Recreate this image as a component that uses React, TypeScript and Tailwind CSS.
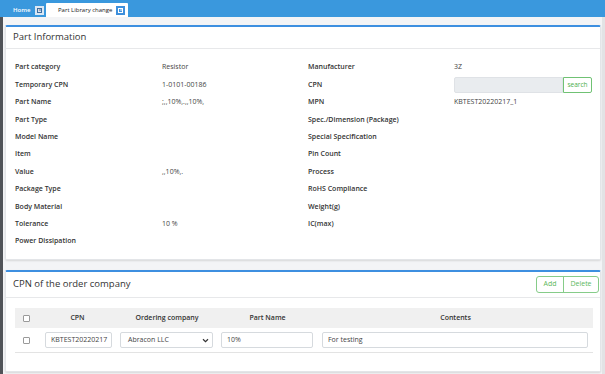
import React from "react";

const left: [string, string][] = [
  ["Part category", "Resistor"],
  ["Temporary CPN", "1-0101-00186"],
  ["Part Name", ";,,10%,.,,10%,"],
  ["Part Type", ""],
  ["Model Name", ""],
  ["Item", ""],
  ["Value", ",,10%,."],
  ["Package Type", ""],
  ["Body Material", ""],
  ["Tolerance", "10 %"],
  ["Power Dissipation", ""],
];

const right: [string, string][] = [
  ["Manufacturer", "3Z"],
  ["CPN", "__INPUT__"],
  ["MPN", "KBTEST20220217_1"],
  ["Spec./Dimension (Package)", ""],
  ["Special Specification", ""],
  ["Pin Count", ""],
  ["Process", ""],
  ["RoHS Compliance", ""],
  ["Weight(g)", ""],
  ["IC(max)", ""],
  ["", ""],
];

function CloseIcon({ active }: { active?: boolean }) {
  return active ? (
    <span className="inline-flex w-[9px] h-[9px] bg-[#3d8fdc] items-center justify-center shrink-0">
      <span className="w-[5px] h-[5px] border border-white flex items-center justify-center text-white text-[5px] leading-none">
        ×
      </span>
    </span>
  ) : (
    <span className="inline-flex w-[9px] h-[9px] bg-[#dbe7f3] items-center justify-center shrink-0">
      <span className="w-[5px] h-[5px] border border-[#3d6ea0] flex items-center justify-center text-[#2d4f74] text-[5px] leading-none">
        ×
      </span>
    </span>
  );
}

function Check() {
  return <span className="inline-block w-[7px] h-[7px] border border-[#9a9a9a] rounded-[1px] bg-white" />;
}

export default function App() {
  return (
    <div className="w-[605px] h-[374px] overflow-hidden bg-[#f3f4f6] font-['Open_Sans',sans-serif] text-[#333] flex flex-col">
      {/* tab bar */}
      <div className="h-[17px] bg-[#3a98dd] flex items-end shrink-0">
        <div className="h-[14px] w-[46px] pl-[13px] flex items-center gap-[5px]">
          <span className="text-white text-[6px] font-semibold">Home</span>
          <CloseIcon />
        </div>
        <div className="h-[14px] w-[82px] bg-white flex items-center pl-[12px] gap-[4px] rounded-t-[1px] whitespace-nowrap">
          <span className="text-[#222] text-[6px]">Part Library change</span>
          <CloseIcon active />
        </div>
      </div>

      <div className="flex flex-1">
        <div className="w-[3px] bg-[#505358]" />
        <div className="flex-1 pl-[2px] pr-[1px] pt-[8px] flex flex-col gap-[10px]">
          {/* Card 1 */}
          <div className="bg-white border border-[#e3e5e8] border-t-2 border-t-[#3d8fe0] rounded-[2px] shadow-[0_1px_2px_rgba(0,0,0,0.12)] h-[235px]">
            <div className="h-[22px] flex items-center pl-[7px] text-[9.5px] text-[#333] border-b border-[#e7e8ea]">
              Part Information
            </div>
            <div className="pl-[9px] pt-[10px] grid grid-cols-[147px_146px_146px_138px]">
              {left.map((l, i) => (
                <React.Fragment key={i}>
                  <div className="h-[17.4px] flex items-center text-[7px] font-semibold text-[#333]">{l[0]}</div>
                  <div className="h-[17.4px] flex items-center text-[7px] text-[#444]">{l[1]}</div>
                  <div className="h-[17.4px] flex items-center text-[7px] font-semibold text-[#333]">{right[i][0]}</div>
                  <div className="h-[17.4px] flex items-center text-[7px] text-[#444]">
                    {right[i][1] === "__INPUT__" ? (
                      <div className="flex h-[16px] w-full">
                        <div className="flex-1 bg-[#e9ecef] border border-[#dfe2e6] rounded-l-[2px]" />
                        <div className="w-[29px] border border-[#70c274] rounded-r-[2px] text-[#4cae4c] text-[6.5px] flex items-center justify-center bg-white">
                          search
                        </div>
                      </div>
                    ) : (
                      right[i][1]
                    )}
                  </div>
                </React.Fragment>
              ))}
            </div>
          </div>

          {/* Card 2 */}
          <div className="bg-white border border-[#e3e5e8] border-t-2 border-t-[#3d8fe0] rounded-[2px] shadow-[0_1px_2px_rgba(0,0,0,0.12)] h-[102px]">
            <div className="h-[26px] flex items-center justify-between pl-[7px] pr-[1px] border-b border-[#e7e8ea]">
              <span className="text-[9.5px] text-[#333]">CPN of the order company</span>
              <div className="flex h-[17px] border border-[#86cc89] rounded-[3px] text-[7px] text-[#5cb85c]">
                <div className="w-[27px] flex items-center justify-center border-r border-[#86cc89]">Add</div>
                <div className="w-[34px] flex items-center justify-center">Delete</div>
              </div>
            </div>
            <div className="pl-[9px] pt-[10px] w-[588px]">
              <div className="grid grid-cols-[23px_79px_100px_101px_275px] text-[7px]">
                <div className="h-[20px] bg-[#f0f0f0] flex items-center justify-center"><Check /></div>
                <div className="h-[20px] bg-[#f0f0f0] flex items-center justify-center font-semibold">CPN</div>
                <div className="h-[20px] bg-[#f0f0f0] flex items-center justify-center font-semibold">Ordering company</div>
                <div className="h-[20px] bg-[#f0f0f0] flex items-center justify-center font-semibold">Part Name</div>
                <div className="h-[20px] bg-[#f0f0f0] flex items-center justify-center font-semibold">Contents</div>

                <div className="h-[25px] border-b border-[#e3e3e3] flex items-center justify-center"><Check /></div>
                <div className="h-[25px] border-b border-[#e3e3e3] flex items-center pl-[7px] pr-[5px]">
                  <div className="h-[16px] w-full border border-[#d6dade] rounded-[2px] flex items-center pl-[5px] text-[#444] overflow-hidden whitespace-nowrap">KBTEST20220217</div>
                </div>
                <div className="h-[25px] border-b border-[#e3e3e3] flex items-center pl-[3px] pr-[4px]">
                  <div className="h-[16px] w-full border border-[#d6dade] rounded-[2px] flex items-center justify-between pl-[7px] pr-[3px] text-[#444]">
                    <span>Abracon LLC</span>
                    <svg width="7" height="5" viewBox="0 0 7 5"><path d="M1 1.2 L3.5 3.6 L6 1.2" fill="none" stroke="#333" strokeWidth="1.2" /></svg>
                  </div>
                </div>
                <div className="h-[25px] border-b border-[#e3e3e3] flex items-center pl-[4px] pr-[5px]">
                  <div className="h-[16px] w-full border border-[#d6dade] rounded-[2px] flex items-center pl-[5px] text-[#444]">10%</div>
                </div>
                <div className="h-[25px] border-b border-[#e3e3e3] flex items-center pl-[4px] pr-[5px]">
                  <div className="h-[16px] w-full border border-[#d6dade] rounded-[2px] flex items-center pl-[5px] text-[#444]">For testing</div>
                </div>
              </div>
            </div>
          </div>
        </div>
        <div className="w-[3px] bg-[#e2e3e5]" />
      </div>
    </div>
  );
}
